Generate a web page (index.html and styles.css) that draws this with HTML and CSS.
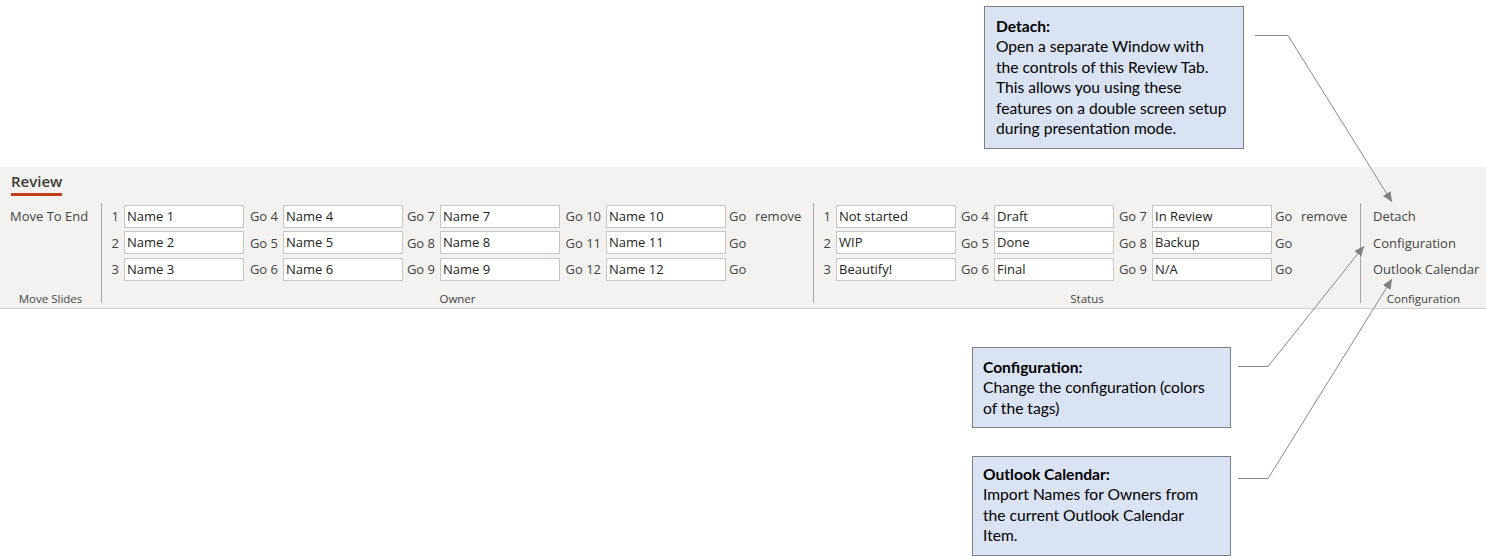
FILE: index.html
```html
<!DOCTYPE html>
<html lang="en">
<head>
<meta charset="utf-8">
<title>Review Tab</title>
<link rel="stylesheet" href="styles.css">
</head>
<body>
<div class="page">
  <div class="ribbon">
    <div class="tabs"><span class="tab">Review</span></div>
    <div class="groups">
      <div class="group g-move">
        <div class="group-body">
          <div class="cmd">Move To End</div>
        </div>
        <div class="group-label">Move Slides</div>
      </div>
      <div class="sep"></div>
      <div class="group g-owner">
        <div class="group-body grid owner-grid">
          <span class="lbl">1</span><span class="field">Name 1</span>
          <span class="lbl">Go 4</span><span class="field">Name 4</span>
          <span class="lbl">Go 7</span><span class="field">Name 7</span>
          <span class="lbl">Go 10</span><span class="field">Name 10</span>
          <span class="go">Go</span><span class="rm">remove</span>

          <span class="lbl">2</span><span class="field">Name 2</span>
          <span class="lbl">Go 5</span><span class="field">Name 5</span>
          <span class="lbl">Go 8</span><span class="field">Name 8</span>
          <span class="lbl">Go 11</span><span class="field">Name 11</span>
          <span class="go">Go</span><span class="rm"></span>

          <span class="lbl">3</span><span class="field">Name 3</span>
          <span class="lbl">Go 6</span><span class="field">Name 6</span>
          <span class="lbl">Go 9</span><span class="field">Name 9</span>
          <span class="lbl">Go 12</span><span class="field">Name 12</span>
          <span class="go">Go</span><span class="rm"></span>
        </div>
        <div class="group-label">Owner</div>
      </div>
      <div class="sep"></div>
      <div class="group g-status">
        <div class="group-body grid status-grid">
          <span class="lbl">1</span><span class="field">Not started</span>
          <span class="lbl">Go 4</span><span class="field">Draft</span>
          <span class="lbl">Go 7</span><span class="field">In Review</span>
          <span class="go">Go</span><span class="rm">remove</span>

          <span class="lbl">2</span><span class="field">WIP</span>
          <span class="lbl">Go 5</span><span class="field">Done</span>
          <span class="lbl">Go 8</span><span class="field">Backup</span>
          <span class="go">Go</span><span class="rm"></span>

          <span class="lbl">3</span><span class="field">Beautify!</span>
          <span class="lbl">Go 6</span><span class="field">Final</span>
          <span class="lbl">Go 9</span><span class="field">N/A</span>
          <span class="go">Go</span><span class="rm"></span>
        </div>
        <div class="group-label">Status</div>
      </div>
      <div class="sep"></div>
      <div class="group g-config">
        <div class="group-body config-list">
          <div class="cmd">Detach</div>
          <div class="cmd">Configuration</div>
          <div class="cmd">Outlook Calendar</div>
        </div>
        <div class="group-label">Configuration</div>
      </div>
    </div>
  </div>

  <div class="callout callout-detach">
    <div class="callout-title">Detach:</div>
    <div>Open a separate Window with<br>the controls of this Review Tab.<br>This allows you using these<br>features on a double screen setup<br>during presentation mode.</div>
  </div>
  <div class="callout callout-config">
    <div class="callout-title">Configuration:</div>
    <div>Change the configuration (colors<br>of the tags)</div>
  </div>
  <div class="callout callout-outlook">
    <div class="callout-title">Outlook Calendar:</div>
    <div>Import Names for Owners from<br>the current Outlook Calendar<br>Item.</div>
  </div>

  <svg class="connectors" width="1486" height="556" viewBox="0 0 1486 556" xmlns="http://www.w3.org/2000/svg">
    <defs>
      <marker id="arrow" markerUnits="userSpaceOnUse" markerWidth="12" markerHeight="10" refX="10" refY="4.5" orient="auto">
        <path d="M0,0 L10,4.5 L0,9 Z" fill="#7f7f7f"/>
      </marker>
    </defs>
    <polyline points="1255,35.5 1288,35.5 1392,202" fill="none" stroke="#8a8a8a" stroke-width="1" marker-end="url(#arrow)"/>
    <polyline points="1238,366.5 1268,366.5 1364,246" fill="none" stroke="#8a8a8a" stroke-width="1" marker-end="url(#arrow)"/>
    <polyline points="1238,478.5 1268,478.5 1392,279" fill="none" stroke="#8a8a8a" stroke-width="1" marker-end="url(#arrow)"/>
  </svg>
</div>
</body>
</html>
```

FILE: styles.css
```css
html, body {
  margin: 0;
  padding: 0;
  background: #ffffff;
}

.page {
  position: relative;
  width: 1486px;
  height: 556px;
  overflow: hidden;
  font-family: "Open Sans", "Noto Sans", "Liberation Sans", sans-serif;
}

.ribbon {
  margin-top: 167px;
  height: 141px;
  background: #f3f2f1;
  border-bottom: 1px solid #d2d0ce;
  display: flex;
  flex-direction: column;
}

.tabs {
  height: 36px;
  padding-left: 11px;
}

.tab {
  display: inline-block;
  margin-top: 4px;
  line-height: 20px;
  padding-bottom: 2px;
  border-bottom: 3px solid #c43e1c;
  font-size: 15px;
  font-weight: 600;
  color: #3b3a39;
}

.groups {
  display: flex;
  height: 105px;
}

.group {
  display: flex;
  flex-direction: column;
}

.group-body {
  height: 88px;
}

.group-label {
  height: 16px;
  line-height: 16px;
  text-align: center;
  font-size: 11.5px;
  color: #444;
}

.sep {
  width: 1px;
  height: 100px;
  background: #a8a6a4;
}

.g-move { width: 101px; }
.g-owner { width: 711px; }
.g-status { width: 546px; }
.g-config { width: 125px; }

.cmd {
  height: 26.5px;
  line-height: 26.5px;
  font-size: 13px;
  color: #444;
  white-space: nowrap;
}

.g-move .cmd {
  padding-left: 10px;
}

.config-list {
  padding-left: 12px;
}

.grid {
  display: grid;
  grid-auto-rows: 26.5px;
  align-items: center;
  font-size: 13px;
  color: #444;
}

.owner-grid {
  grid-template-columns: 22px 120px 39px 120px 37px 120px 46px 120px 26px auto;
}

.status-grid {
  grid-template-columns: 22px 120px 38px 120px 38px 120px 26px auto;
}

.lbl {
  text-align: right;
  padding-right: 5px;
  white-space: nowrap;
}

.go {
  padding-left: 3px;
}

.rm {
  padding-left: 3px;
  white-space: nowrap;
}

.field {
  box-sizing: border-box;
  height: 23px;
  line-height: 21px;
  background: #ffffff;
  border: 1px solid #c8c6c4;
  padding-left: 2px;
  color: #252423;
  white-space: nowrap;
  overflow: hidden;
}

.callout {
  position: absolute;
  box-sizing: border-box;
  background: #dae3f3;
  border: 1.5px solid #7f7f7f;
  font-family: "Lato", "Liberation Sans", sans-serif;
  font-size: 15.6px;
  line-height: 20.4px;
  color: #000;
  padding: 9px 4px 0 11px;
  white-space: nowrap;
}

.callout-title {
  font-weight: 700;
}

.callout-detach {
  left: 984px;
  top: 6px;
  width: 260px;
  height: 143px;
}

.callout-config {
  left: 972px;
  top: 347px;
  width: 259px;
  height: 81px;
  padding-left: 10px;
  padding-top: 9px;
}

.callout-outlook {
  left: 972px;
  top: 456px;
  width: 259px;
  height: 100px;
  padding-left: 10px;
  padding-top: 7px;
}

.connectors {
  position: absolute;
  left: 0;
  top: 0;
  pointer-events: none;
}
```
